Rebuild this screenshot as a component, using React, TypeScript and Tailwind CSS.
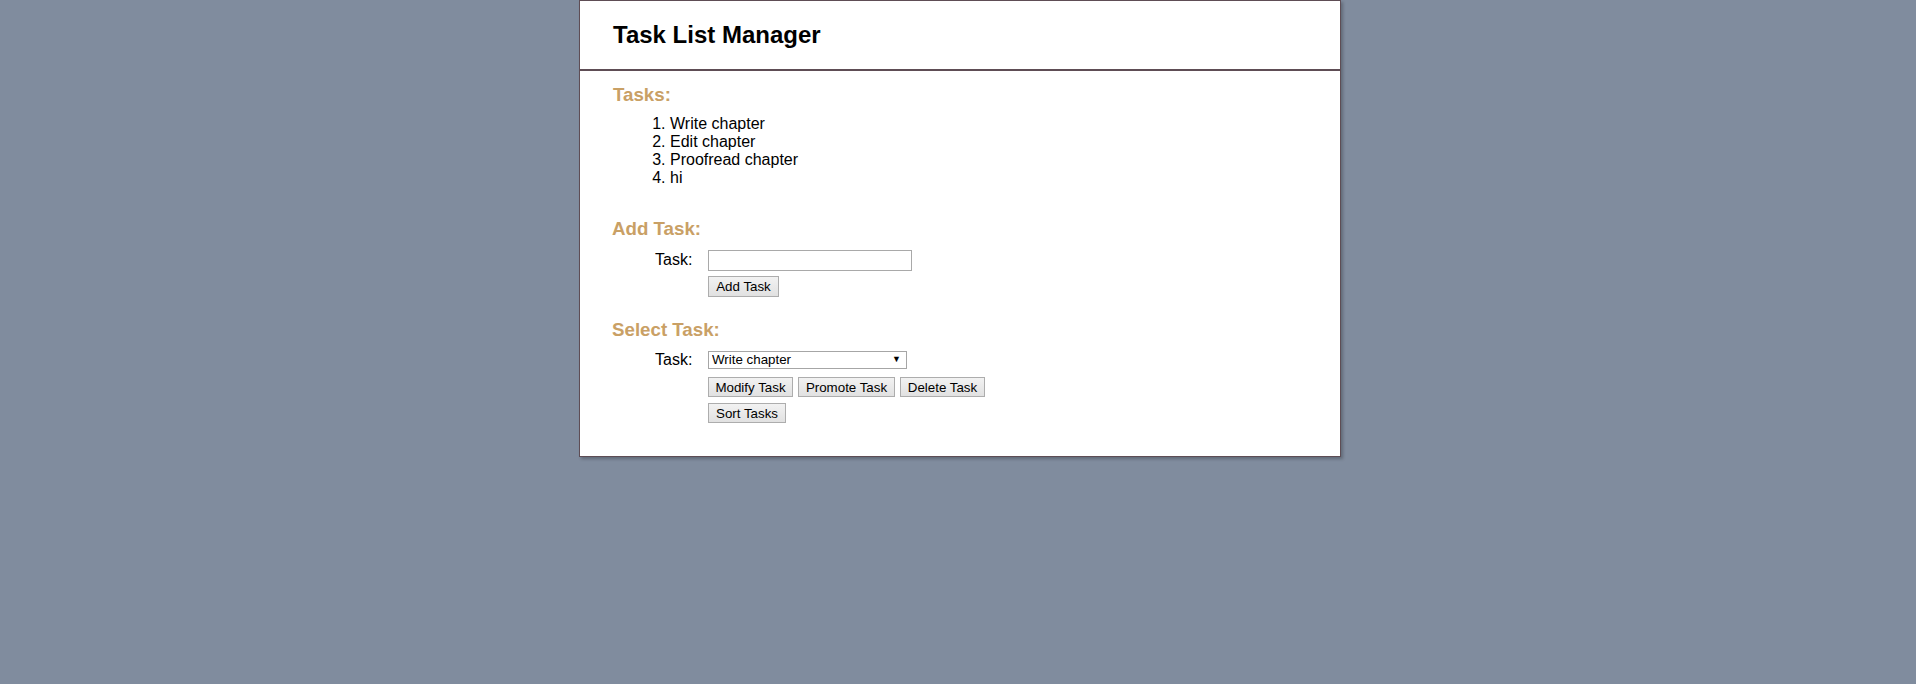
import React from 'react';

const tasks = ['Write chapter', 'Edit chapter', 'Proofread chapter', 'hi'];

const Btn: React.FC<{ label: string; w: string }> = ({ label, w }) => (
  <button
    className={`${w} h-[20px] border border-[#adadad] bg-gradient-to-b from-[#f2f2f2] to-[#e1e1e1] text-[13.33px] leading-[15px] text-black`}
  >
    {label}
  </button>
);

export default function App() {
  return (
    <div className="min-h-screen bg-[#808c9e] font-['Liberation_Sans',Arial,sans-serif] text-black">
      <div className="flex justify-center pl-[4px]">
        <div className="w-[762px] bg-white border border-[#5e4d55] shadow-[2px_2px_3px_rgba(0,0,0,0.25)]">
          {/* Header */}
          <div className="h-[70px] flex items-center pl-[33px] border-b-2 border-[#5e4d55]">
            <h1 className="text-[24px] font-bold pb-[1px]">Task List Manager</h1>
          </div>

          {/* Body */}
          <div className="pl-[33px] pt-[13px] pb-[33px]">
            <h2 className="text-[18.72px] font-bold text-[#c9a065] leading-[21px]">Tasks:</h2>
            <ol className="list-decimal ml-[17px] pl-[40px] mt-[10px] text-[16px] leading-[18px]">
              {tasks.map((t) => (
                <li key={t}>{t}</li>
              ))}
            </ol>

            <h2 className="mt-[31px] -ml-px text-[18.72px] font-bold text-[#c9a065] leading-[21px]">Add Task:</h2>
            <div className="flex ml-[42px] mt-[11px]">
              <label className="w-[53px] text-[16px] leading-[18px] pt-[1px]">Task:</label>
              <div className="flex flex-col gap-[5px]">
                <input type="text" className="w-[204px] h-[21px] border border-[#a9a9a9] bg-white outline-none" />
                <Btn label="Add Task" w="w-[71px] h-[21px]" />
              </div>
            </div>

            <h2 className="mt-[22px] -ml-px text-[18.72px] font-bold text-[#c9a065] leading-[21px]">Select Task:</h2>
            <div className="flex ml-[42px] mt-[11px]">
              <label className="w-[53px] text-[16px] leading-[18px]">Task:</label>
              <div className="flex flex-col">
                <div className="relative w-[199px] h-[18px]">
                  <select className="appearance-none block w-full h-[18px] py-0 border border-[#a6a6a6] bg-white pl-[3px] text-[13.33px] leading-[16px] outline-none">
                    {tasks.map((t) => (
                      <option key={t}>{t}</option>
                    ))}
                  </select>
                  <span className="absolute right-[6px] inset-y-0 flex items-center text-[9px] pointer-events-none">▼</span>
                </div>
                <div className="flex gap-[5px] mt-[8px]">
                  <Btn label="Modify Task" w="w-[85px]" />
                  <Btn label="Promote Task" w="w-[97px]" />
                  <Btn label="Delete Task" w="w-[85px]" />
                </div>
                <div className="flex mt-[6px]">
                  <Btn label="Sort Tasks" w="w-[78px]" />
                </div>
              </div>
            </div>
          </div>
        </div>
      </div>
    </div>
  );
}
